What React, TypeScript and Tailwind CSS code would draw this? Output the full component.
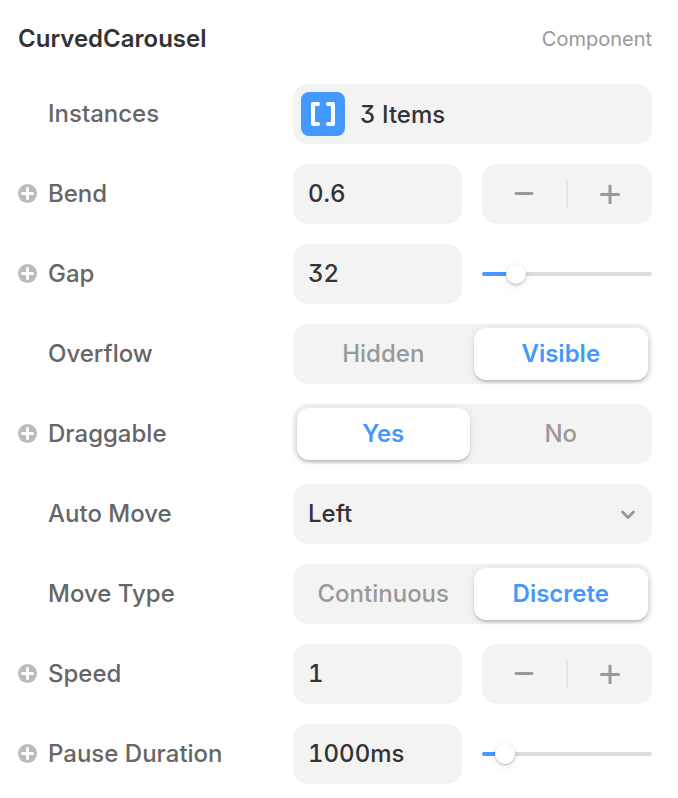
import { useId, useState } from "react";
import type { ReactNode } from "react";

const field =
  "h-15 w-full min-w-0 rounded-[15px] bg-[#f3f3f3] text-2xl font-medium text-[#333] outline-none";

function AddBadge({ name }: { name: string }) {
  return (
    <button type="button" aria-label={`Add variable for ${name}`} className="block size-5">
      <svg viewBox="0 0 20 20" className="block size-full" aria-hidden="true">
        <circle cx="9.5" cy="9.5" r="9.5" fill="#bbb" />
        <path d="M9.5 4.5v10M4.5 9.5h10" stroke="#fff" strokeWidth="3" strokeLinecap="round" />
      </svg>
    </button>
  );
}

function Row({
  label,
  id,
  add = false,
  children,
}: {
  label: string;
  id: string;
  add?: boolean;
  children: ReactNode;
}) {
  return (
    <div className="grid grid-cols-[275px_minmax(0,1fr)] items-center">
      <div className="grid grid-cols-[30px_1fr] items-center">
        <span>{add && <AddBadge name={label} />}</span>
        <label id={`${id}-label`} htmlFor={id} className="text-2xl font-medium text-[#666]">
          {label}
        </label>
      </div>
      {children}
    </div>
  );
}

function StepperRow({ label, initial, step }: { label: string; initial: number; step: number }) {
  const id = useId();
  const [value, setValue] = useState(String(initial));
  const move = (delta: number) =>
    setValue((current) => String(Math.round(((Number(current) || 0) + delta) * 10) / 10));
  return (
    <Row label={label} id={id} add>
      <div className="grid grid-cols-[calc(50%-11px)_minmax(0,1fr)] gap-5">
        <input
          id={id}
          type="text"
          inputMode="decimal"
          value={value}
          onChange={(event) => setValue(event.target.value)}
          className={`${field} px-[15px] pb-0.5`}
        />
        <div className="flex h-15 items-center rounded-[15px] bg-[#f3f3f3] text-[#999]">
          <button
            type="button"
            aria-label={`Decrease ${label}`}
            onClick={() => move(-step)}
            className="flex h-full flex-1 items-center justify-center"
          >
            <svg viewBox="0 0 20 20" className="size-5" aria-hidden="true">
              <path d="M2 9.5h16" stroke="currentColor" strokeWidth="3" strokeLinecap="round" />
            </svg>
          </button>
          <span className="h-7 w-0.5 bg-[#e4e4e4]" />
          <button
            type="button"
            aria-label={`Increase ${label}`}
            onClick={() => move(step)}
            className="flex h-full flex-1 items-center justify-center"
          >
            <svg viewBox="0 0 20 20" className="size-5" aria-hidden="true">
              <path
                d="M1.5 10.5h17M10 2v17"
                stroke="currentColor"
                strokeWidth="3"
                strokeLinecap="round"
              />
            </svg>
          </button>
        </div>
      </div>
    </Row>
  );
}

function SliderRow({
  label,
  initial,
  min,
  max,
  step,
  unit = "",
}: {
  label: string;
  initial: number;
  min: number;
  max: number;
  step: number;
  unit?: string;
}) {
  const id = useId();
  const [value, setValue] = useState(initial);
  const percent = ((value - min) / (max - min)) * 100;
  return (
    <Row label={label} id={id} add>
      <div className="grid grid-cols-[calc(50%-11px)_minmax(0,1fr)] items-center gap-5">
        <input
          id={id}
          type="text"
          value={`${value}${unit}`}
          onChange={(event) => setValue(Number.parseInt(event.target.value, 10) || 0)}
          className={`${field} px-[15px] pb-0.5`}
        />
        <input
          type="range"
          aria-label={`${label} slider`}
          min={min}
          max={max}
          step={step}
          value={value}
          onChange={(event) => setValue(Number(event.target.value))}
          style={{
            backgroundImage: `linear-gradient(to right, #4499ff ${percent}%, #dddddd ${percent}%)`,
          }}
          className="h-1 w-full min-w-0 cursor-pointer appearance-none rounded-full outline-none [&::-webkit-slider-thumb]:size-5 [&::-webkit-slider-thumb]:appearance-none [&::-webkit-slider-thumb]:rounded-full [&::-webkit-slider-thumb]:bg-white [&::-webkit-slider-thumb]:shadow-[0_1px_2px_rgba(0,0,0,0.25),0_2px_8px_rgba(0,0,0,0.1)]"
        />
      </div>
    </Row>
  );
}

function SegmentRow({
  label,
  options,
  initial,
  add = false,
}: {
  label: string;
  options: string[];
  initial: string;
  add?: boolean;
}) {
  const id = useId();
  const [selected, setSelected] = useState(initial);
  return (
    <Row label={label} id={id} add={add}>
      <div
        id={id}
        role="group"
        aria-labelledby={`${id}-label`}
        className="grid h-15 grid-cols-[calc(50%-3px)_minmax(0,1fr)] gap-1 rounded-[15px] bg-[#f3f3f3] p-1"
      >
        {options.map((option) => (
          <button
            key={option}
            type="button"
            aria-pressed={option === selected}
            onClick={() => setSelected(option)}
            className={
              option === selected
                ? "rounded-xl bg-white text-2xl font-semibold text-[#4499ff] shadow-[0_2px_2px_rgba(0,0,0,0.16),0_1px_8px_rgba(0,0,0,0.1)]"
                : "rounded-xl text-2xl font-medium text-[#999]"
            }
          >
            {option}
          </button>
        ))}
      </div>
    </Row>
  );
}

function InstancesRow() {
  const id = useId();
  return (
    <Row label="Instances" id={id}>
      <button id={id} type="button" className={`${field} flex items-center gap-[15px] p-2 text-left`}>
        <span className="flex size-11 items-center justify-center rounded-lg bg-[#4499ff]">
          <svg viewBox="0 0 24 24" className="size-6" fill="none" aria-hidden="true">
            <path
              d="M7 2H2v20h5M17 2h5v20h-5"
              stroke="#fff"
              strokeWidth="4"
              strokeLinecap="round"
              strokeLinejoin="round"
            />
          </svg>
        </span>
        <span className="pt-0.5">3 Items</span>
      </button>
    </Row>
  );
}

function AutoMoveRow() {
  const id = useId();
  return (
    <Row label="Auto Move" id={id}>
      <div className="relative">
        <select id={id} defaultValue="Left" className={`${field} block appearance-none px-[15px]`}>
          <option>Left</option>
          <option>Right</option>
          <option>None</option>
        </select>
        <svg
          viewBox="0 0 16 16"
          className="pointer-events-none absolute inset-y-0 right-4 my-auto size-4"
          fill="none"
          aria-hidden="true"
        >
          <path
            d="M2.5 6 8 11.5 13.5 6"
            stroke="#999"
            strokeWidth="3"
            strokeLinecap="round"
            strokeLinejoin="round"
          />
        </svg>
      </div>
    </Row>
  );
}

export default function App() {
  return (
    <main className="min-h-screen bg-white pt-5 pr-[26px] pb-3.5 pl-[18px] font-[Inter,'Liberation_Sans',sans-serif] tabular-nums [font-feature-settings:'cv09']">
      <header className="mb-[26px] flex h-[38px] items-center justify-between">
        <h1 className="text-2xl font-semibold text-[#333]">CurvedCarousel</h1>
        <span className="text-xl text-[#999]">Component</span>
      </header>
      <div className="flex flex-col gap-5">
        <InstancesRow />
        <StepperRow label="Bend" initial={0.6} step={0.1} />
        <SliderRow label="Gap" initial={32} min={0} max={200} step={1} />
        <SegmentRow label="Overflow" options={["Hidden", "Visible"]} initial="Visible" />
        <SegmentRow label="Draggable" options={["Yes", "No"]} initial="Yes" add />
        <AutoMoveRow />
        <SegmentRow label="Move Type" options={["Continuous", "Discrete"]} initial="Discrete" />
        <StepperRow label="Speed" initial={1} step={1} />
        <SliderRow label="Pause Duration" initial={1000} min={100} max={10000} step={100} unit="ms" />
      </div>
    </main>
  );
}
